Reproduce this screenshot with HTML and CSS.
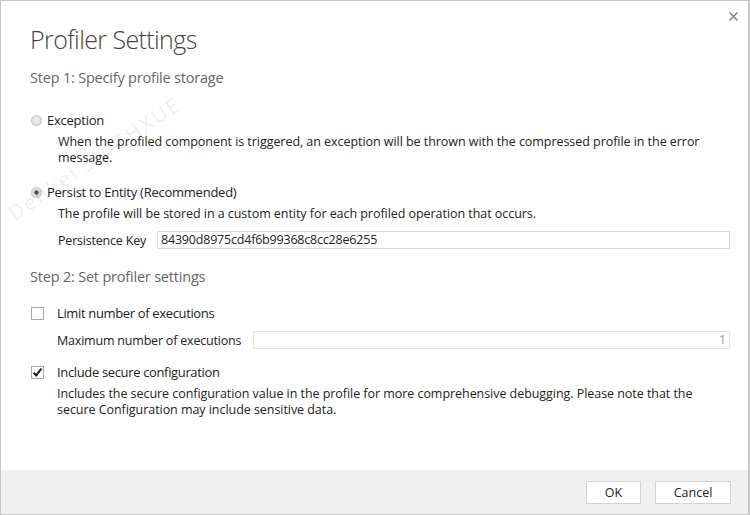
FILE: index.html
```html
<!DOCTYPE html>
<html lang="en">
<head>
<meta charset="utf-8">
<title>Profiler Settings</title>
<link rel="stylesheet" href="styles.css">
</head>
<body>
<div class="dialog">
  <button class="close" aria-label="Close">
    <svg width="9" height="9" viewBox="0 0 9 9"><path d="M0.5 0.5 L8.5 8.5 M8.5 0.5 L0.5 8.5" stroke="#777" stroke-width="1.2" fill="none"/></svg>
  </button>
  <div class="watermark">Denkei SH-CHXUE</div>
  <div class="content">
    <h1 class="title">Profiler Settings</h1>
    <h2 class="step step-first">Step 1: Specify profile storage</h2>

    <div class="option">
      <span class="radio"></span>
      <span class="opt-label">Exception</span>
    </div>
    <p class="desc">When the profiled component is triggered, an exception will be thrown with the compressed profile in the error message.</p>

    <div class="option option-second">
      <span class="radio radio-on"></span>
      <span class="opt-label">Persist to Entity (Recommended)</span>
    </div>
    <p class="desc desc-persist">The profile will be stored in a custom entity for each profiled operation that occurs.</p>
    <div class="field key-field">
      <span class="field-label">Persistence Key</span>
      <span class="input">84390d8975cd4f6b99368c8cc28e6255</span>
    </div>

    <h2 class="step step-second">Step 2: Set profiler settings</h2>

    <div class="check-row">
      <span class="checkbox"></span>
      <span class="opt-label">Limit number of executions</span>
    </div>
    <div class="field max-field">
      <span class="field-label">Maximum number of executions</span>
      <span class="input input-disabled">1</span>
    </div>

    <div class="check-row check-second">
      <span class="checkbox">
        <svg width="11" height="11" viewBox="0 0 11 11"><path d="M1.6 5.6 L4.2 8.4 L9.4 1.6" stroke="#1a1a1a" stroke-width="2" fill="none"/></svg>
      </span>
      <span class="opt-label">Include secure configuration</span>
    </div>
    <p class="desc desc-check">Includes the secure configuration value in the profile for more comprehensive debugging. Please note that the secure Configuration may include sensitive data.</p>
  </div>
  <div class="footer">
    <button class="btn btn-ok">OK</button>
    <button class="btn btn-cancel">Cancel</button>
  </div>
</div>
</body>
</html>
```
FILE: styles.css
```css
* { box-sizing: border-box; }
html, body { margin: 0; padding: 0; }
body {
  width: 750px;
  height: 515px;
  overflow: hidden;
  background: #fff;
  font-family: "Open Sans", "Noto Sans", sans-serif;
  color: #222;
}
.dialog {
  position: relative;
  width: 750px;
  height: 515px;
  border: 1px solid #c6c6c6;
  border-right-width: 2px;
  display: flex;
  flex-direction: column;
  background: #fff;
  overflow: hidden;
}
.close {
  position: absolute;
  top: 9px;
  right: 8px;
  width: 13px;
  height: 13px;
  border: 0;
  padding: 0;
  background: transparent;
  display: flex;
  align-items: center;
  justify-content: center;
}
.watermark {
  position: absolute;
  left: 9px;
  top: 200px;
  font-size: 21px;
  font-weight: 600;
  letter-spacing: 1.5px;
  color: rgba(0,0,0,0.06);
  transform: rotate(-34deg);
  transform-origin: left center;
  white-space: nowrap;
  pointer-events: none;
}
.content {
  flex: 1;
  padding: 0 18px 0 29px;
  font-size: 12.5px;
}
.title {
  margin: 21px 0 0;
  font-size: 25px;
  font-weight: 300;
  line-height: 34px;
  color: #444;
  letter-spacing: -0.6px;
}
.step {
  margin: 0;
  font-size: 14.5px;
  font-weight: 400;
  line-height: 20px;
  color: #666;
  letter-spacing: -0.2px;
}
.step-first { margin-top: 12px; }
.step-second { margin-top: 18px; }
.option {
  display: flex;
  align-items: center;
  gap: 5px;
  margin-top: 23px;
  height: 18px;
  padding-left: 1px;
}
.option-second { margin-top: 17px; }
.opt-label {
  font-size: 13px;
  letter-spacing: -0.25px;
  line-height: 18px;
}
.radio {
  width: 11px;
  height: 11px;
  border-radius: 50%;
  background: radial-gradient(circle at 50% 40%, #ececec 0%, #d6d6d6 100%);
  box-shadow: inset 0 0 0 1px #cfcfcf;
  flex: none;
}
.radio-on {
  background: radial-gradient(circle, #444 0, #555 1.8px, #dedede 2.5px, #d4d4d4 100%);
}
.desc {
  margin: 5px 0 0 28px;
  line-height: 16px;
  letter-spacing: -0.05px;
  max-width: 670px;
}
.desc-persist { margin-top: 5px; }
.field {
  display: flex;
  align-items: center;
  height: 18px;
}
.key-field { margin: 9px 0 0 28px; }
.max-field { margin: 9px 0 0 27px; }
.field-label {
  letter-spacing: -0.2px;
  flex: none;
}
.key-field .field-label { width: 99px; }
.max-field .field-label { width: 196px; }
.input {
  flex: 1;
  height: 18px;
  border: 1px solid #d9d9d9;
  padding: 0 3px;
  line-height: 16px;
  letter-spacing: -0.2px;
  color: #222;
}
.input-disabled {
  border-color: #e6e6e6;
  text-align: right;
  color: #999;
  padding-right: 3px;
}
.check-row {
  display: flex;
  align-items: center;
  gap: 13px;
  height: 18px;
  margin-top: 17px;
  padding-left: 1px;
}
.check-row .opt-label { letter-spacing: -0.35px; }
.check-second { margin-top: 14px; }
.checkbox {
  width: 13px;
  height: 13px;
  border: 1px solid #a8a8a8;
  background: #fff;
  flex: none;
  display: flex;
  align-items: center;
  justify-content: center;
}
.desc-check { margin-left: 27px; margin-top: 5px; }
.footer {
  height: 44px;
  background: #f0f0f0;
  display: flex;
  align-items: center;
  justify-content: flex-end;
  gap: 14px;
  padding-right: 17px;
}
.btn {
  height: 23px;
  border: 1px solid #d4d4d4;
  background: #fff;
  font-family: "Open Sans", "Noto Sans", sans-serif;
  font-size: 12.5px;
  color: #222;
  padding: 0;
}
.btn-ok { width: 55px; }
.btn-cancel { width: 76px; }
```
